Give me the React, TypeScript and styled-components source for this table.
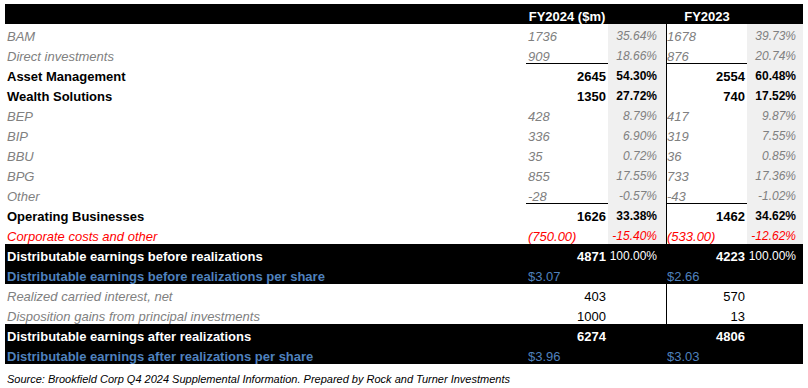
import React from "react";
import styled, { createGlobalStyle, css } from "styled-components";

const Global = createGlobalStyle`
  html, body { margin: 0; padding: 0; background: #ffffff; }
  body { font-family: "Liberation Sans", Arial, sans-serif; }
`;

const Page = styled.div`
  padding: 4px 5px 0 5px;
  width: 798px;
`;

const Table = styled.div`
  display: flex;
  flex-direction: column;
`;

type RowKind = "plain" | "dark" | "head";

const Row = styled.div<{ $kind?: RowKind }>`
  display: grid;
  grid-template-columns: 521px 82px 58px 81px 56px;
  height: 20px;
  background: ${(p) => (p.$kind === "dark" || p.$kind === "head" ? "#000000" : "#ffffff")};
`;

type Tone = "grey" | "black" | "white" | "blue" | "red";

const toneColor: Record<Tone, string> = {
  grey: "#808080",
  black: "#000000",
  white: "#ffffff",
  blue: "#4f81bd",
  red: "#ff0000",
};

interface CellProps {
  $tone?: Tone;
  $italic?: boolean;
  $bold?: boolean;
  $align?: "left" | "right" | "center";
  $shaded?: boolean;
  $underline?: boolean;
  $divider?: boolean;
  $small?: boolean;
}

const Cell = styled.div<CellProps>`
  box-sizing: border-box;
  height: 20px;
  padding-top: 5px;
  line-height: 15px;
  white-space: nowrap;
  overflow: visible;
  font-size: ${(p) => (p.$small ? "12px" : "13px")};
  color: ${(p) => toneColor[p.$tone ?? "black"]};
  font-style: ${(p) => (p.$italic ? "italic" : "normal")};
  font-weight: ${(p) => (p.$bold ? 700 : 400)};
  text-align: ${(p) => p.$align ?? "left"};
  background: ${(p) => (p.$shaded ? "#f0f0f0" : "transparent")};
  ${(p) =>
    p.$underline &&
    css`
      box-shadow: inset 0 -1px 0 #000000;
    `}
  ${(p) =>
    p.$divider &&
    css`
      border-left: 1px solid #000000;
    `}
`;

const LabelCell = styled(Cell)`
  padding-left: 2px;
`;

const NumCell = styled(Cell)<{ $second?: boolean }>`
  padding-left: ${(p) => (p.$second ? "0px" : "2px")};
  padding-right: 2px;
`;

const PctCell = styled(Cell)<{ $second?: boolean }>`
  padding-right: ${(p) => (p.$second ? "7px" : "9px")};
  text-align: right;
`;

const HeadCell = styled.div<{ $divider?: boolean }>`
  box-sizing: border-box;
  height: 20px;
  padding-top: 5px;
  line-height: 15px;
  font-size: 13px;
  font-weight: 700;
  color: #ffffff;
  text-align: center;
  white-space: nowrap;
  ${(p) => p.$divider && css`padding-left: 1px;`}
`;

const Footer = styled.div`
  margin-top: 9px;
  padding-left: 2px;
  font-size: 11px;
  line-height: 13px;
  font-style: italic;
  color: #000000;
`;

type Kind = "detail" | "total" | "corp" | "deTotal" | "deShare" | "realized";

interface Line {
  label: string;
  kind: Kind;
  v1: string;
  p1?: string;
  v2: string;
  p2?: string;
  underline?: boolean;
}

const lines: Line[] = [
  { label: "BAM", kind: "detail", v1: "1736", p1: "35.64%", v2: "1678", p2: "39.73%" },
  { label: "Direct investments", kind: "detail", v1: "909", p1: "18.66%", v2: "876", p2: "20.74%", underline: true },
  { label: "Asset Management", kind: "total", v1: "2645", p1: "54.30%", v2: "2554", p2: "60.48%" },
  { label: "Wealth Solutions", kind: "total", v1: "1350", p1: "27.72%", v2: "740", p2: "17.52%" },
  { label: "BEP", kind: "detail", v1: "428", p1: "8.79%", v2: "417", p2: "9.87%" },
  { label: "BIP", kind: "detail", v1: "336", p1: "6.90%", v2: "319", p2: "7.55%" },
  { label: "BBU", kind: "detail", v1: "35", p1: "0.72%", v2: "36", p2: "0.85%" },
  { label: "BPG", kind: "detail", v1: "855", p1: "17.55%", v2: "733", p2: "17.36%" },
  { label: "Other", kind: "detail", v1: "-28", p1: "-0.57%", v2: "-43", p2: "-1.02%", underline: true },
  { label: "Operating Businesses", kind: "total", v1: "1626", p1: "33.38%", v2: "1462", p2: "34.62%" },
  { label: "Corporate costs and other", kind: "corp", v1: "(750.00)", p1: "-15.40%", v2: "(533.00)", p2: "-12.62%" },
  { label: "Distributable earnings before realizations", kind: "deTotal", v1: "4871", p1: "100.00%", v2: "4223", p2: "100.00%" },
  { label: "Distributable earnings before realizations per share", kind: "deShare", v1: "$3.07", v2: "$2.66" },
  { label: "Realized carried interest, net", kind: "realized", v1: "403", v2: "570" },
  { label: "Disposition gains from principal investments", kind: "realized", v1: "1000", v2: "13" },
  { label: "Distributable earnings after realizations", kind: "deTotal", v1: "6274", v2: "4806" },
  { label: "Distributable earnings after realizations per share", kind: "deShare", v1: "$3.96", v2: "$3.03" },
];

interface Style {
  labelTone: Tone;
  labelItalic: boolean;
  labelBold: boolean;
  numTone: Tone;
  numItalic: boolean;
  numBold: boolean;
  numAlign: "left" | "right";
  pctTone: Tone;
  pctItalic: boolean;
  pctBold: boolean;
  shaded: boolean;
  dark: boolean;
}

const styles: Record<Kind, Style> = {
  detail: {
    labelTone: "grey", labelItalic: true, labelBold: false,
    numTone: "grey", numItalic: true, numBold: false, numAlign: "left",
    pctTone: "grey", pctItalic: true, pctBold: false, shaded: true, dark: false,
  },
  total: {
    labelTone: "black", labelItalic: false, labelBold: true,
    numTone: "black", numItalic: false, numBold: true, numAlign: "right",
    pctTone: "black", pctItalic: false, pctBold: true, shaded: true, dark: false,
  },
  corp: {
    labelTone: "red", labelItalic: true, labelBold: false,
    numTone: "red", numItalic: true, numBold: false, numAlign: "left",
    pctTone: "red", pctItalic: true, pctBold: false, shaded: true, dark: false,
  },
  deTotal: {
    labelTone: "white", labelItalic: false, labelBold: true,
    numTone: "white", numItalic: false, numBold: true, numAlign: "right",
    pctTone: "white", pctItalic: false, pctBold: false, shaded: false, dark: true,
  },
  deShare: {
    labelTone: "blue", labelItalic: false, labelBold: true,
    numTone: "blue", numItalic: false, numBold: false, numAlign: "left",
    pctTone: "blue", pctItalic: false, pctBold: false, shaded: false, dark: true,
  },
  realized: {
    labelTone: "grey", labelItalic: true, labelBold: false,
    numTone: "black", numItalic: false, numBold: false, numAlign: "right",
    pctTone: "black", pctItalic: false, pctBold: false, shaded: false, dark: false,
  },
};

const DataRow: React.FC<{ line: Line }> = ({ line }) => {
  const s = styles[line.kind];
  const numProps = {
    $tone: s.numTone,
    $italic: s.numItalic,
    $bold: s.numBold,
    $align: s.numAlign,
    $underline: line.underline,
  };
  const pctProps = {
    $tone: s.pctTone,
    $italic: s.pctItalic,
    $bold: s.pctBold,
    $shaded: s.shaded,
    $small: true,
  };
  return (
    <Row $kind={s.dark ? "dark" : "plain"}>
      <LabelCell $tone={s.labelTone} $italic={s.labelItalic} $bold={s.labelBold}>
        {line.label}
      </LabelCell>
      <NumCell {...numProps}>{line.v1}</NumCell>
      <PctCell {...pctProps}>{line.p1 ?? ""}</PctCell>
      <NumCell {...numProps} $second $divider>
        {line.v2}
      </NumCell>
      <PctCell {...pctProps} $second>
        {line.p2 ?? ""}
      </PctCell>
    </Row>
  );
};

export default function App() {
  return (
    <Page>
      <Global />
      <Table>
        <Row $kind="head">
          <HeadCell />
          <HeadCell>FY2024 ($m)</HeadCell>
          <HeadCell />
          <HeadCell $divider>FY2023</HeadCell>
          <HeadCell />
        </Row>
        {lines.map((l) => (
          <DataRow key={l.label} line={l} />
        ))}
      </Table>
      <Footer>
        Source: Brookfield Corp Q4 2024 Supplemental Information. Prepared by Rock and Turner Investments
      </Footer>
    </Page>
  );
}
